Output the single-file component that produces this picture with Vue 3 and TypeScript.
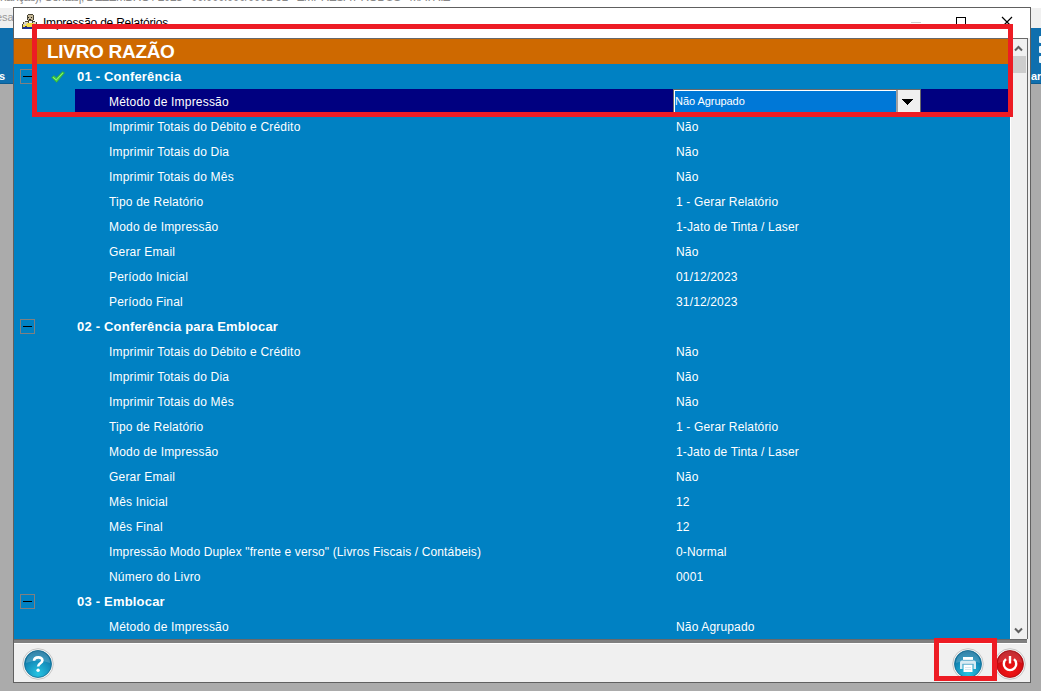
<script setup lang="ts">
interface Row { label: string; value: string; selected?: boolean; tight?: boolean }
interface Group { title: string; checked?: boolean; rows: Row[] }

const r = (label: string, value: string, tight = false): Row => ({ label, value, tight })

const common: Row[] = [
  r('Imprimir Totais do Débito e Crédito', 'Não'),
  r('Imprimir Totais do Dia', 'Não'),
  r('Imprimir Totais do Mês', 'Não'),
  r('Tipo de Relatório', '1 - Gerar Relatório'),
  r('Modo de Impressão', '1-Jato de Tinta / Laser'),
  r('Gerar Email', 'Não'),
]

const groups: Group[] = [
  {
    title: '01 - Conferência',
    checked: true,
    rows: [
      { label: 'Método de Impressão', value: 'Não Agrupado', selected: true },
      ...common,
      r('Período Inicial', '01/12/2023'),
      r('Período Final', '31/12/2023'),
    ],
  },
  {
    title: '02 - Conferência para Emblocar',
    rows: [
      ...common,
      r('Mês Inicial', '12'),
      r('Mês Final', '12'),
      r('Impressão Modo Duplex "frente e verso" (Livros Fiscais / Contábeis)', '0-Normal', true),
      r('Número do Livro', '0001'),
    ],
  },
  { title: '03 - Emblocar', rows: [r('Método de Impressão', 'Não Agrupado')] },
]
</script>

<template>
  <div class="desktop">
    <div class="apptitle"><span>nanças), Contas|, DEZEMBRO / 2023 - 00.000.000/0001-91 - EMPRESA PRODUS - MATRIZ</span></div>
    <div class="appmenu"><span>esa</span></div>
    <div class="appbar">
      <span>s</span>
      <div class="apptool">
        <i></i><i></i><i></i>
        <span>ar</span>
      </div>
    </div>

    <div class="window">
      <header class="titlebar">
        <svg class="appicon" width="16" height="16" viewBox="0 0 16 16" shape-rendering="crispEdges">
          <path d="M6 0h5v1h1v5h-1v1h2v1h2v2h1v5H0v-5h1V8h2V7h3V6H5V1h1z" fill="#4a4636" />
          <path d="M6 1h5v5H6z" fill="#c6b896" />
          <path d="M6 3h1v1H6zM9 3h1v1H9zM7 5h2v1H7z" fill="#222" />
          <path d="M2 8h4v2H2zM11 8h3v2h-3zM1 10h3v2H1zM12 10h3v2h-3z" fill="#d8d4bd" />
          <path d="M7 7h3v2H7z" fill="#f4f4f4" />
          <path d="M5 9h7v1h-1v3H5v-1H4v-2h1zM1 11h2v2H1zM13 11h2v2h-2z" fill="#f3dc45" />
          <path d="M1 13h14v2H1z" fill="#1c2f94" />
        </svg>
        <span class="wtitle">Impressão de Relatórios</span>
        <svg class="controls" width="110" height="12" viewBox="0 0 110 12" shape-rendering="crispEdges">
          <path d="M0 6.500h10" stroke="#ccc" />
          <path d="M45.500 1.500h9v9h-9z" fill="none" stroke="#000" />
          <path d="M91 1l10 10M101 1L91 11" stroke="#000" stroke-width="1.200" shape-rendering="auto" />
        </svg>
      </header>

      <div class="body">
        <div class="tree">
          <h1>LIVRO RAZÃO</h1>
          <template v-for="g in groups" :key="g.title">
            <div class="row group">
              <span class="toggle"></span>
              <span class="mark">
                <svg v-if="g.checked" width="14" height="12" viewBox="0 0 14 12">
                  <path d="M.5 6.500 3 4.500l2.300 2.200L11.500.5l2.200 1.300L5.700 11.500z" fill="#43d143" stroke="#2b9a54" stroke-width=".7" />
                  <path d="M2 6.300 5.300 9l6.500-7" fill="none" stroke="#8af178" />
                </svg>
              </span>
              <b>{{ g.title }}</b>
            </div>
            <div v-for="row in g.rows" :key="row.label" class="row item" :class="{ selected: row.selected }">
              <span class="label" :class="{ tight: row.tight }">{{ row.label }}</span>
              <span v-if="row.selected" class="combo">
                <span class="field">{{ row.value }}</span>
                <span class="drop">
                  <svg width="11" height="6" viewBox="0 0 11 6" shape-rendering="crispEdges"><path d="M0 0h11v1h-1v1H9v1H8v1H7v1H6v1H5V5H4V4H3V3H2V2H1V1H0z" /></svg>
                </span>
              </span>
              <span v-else class="value">{{ row.value }}</span>
            </div>
          </template>
        </div>
        <div class="scroll">
          <svg width="9" height="7" viewBox="0 0 9 7"><path d="M1 5.500 4.500 2 8 5.500" /></svg>
          <div class="thumb"></div>
          <svg class="down" width="9" height="7" viewBox="0 0 9 7"><path d="M1 1.500 4.500 5 8 1.500" /></svg>
        </div>
      </div>
      <div class="divider"></div>

      <footer class="actions">
        <svg width="32" height="32" viewBox="0 0 32 32">
          <defs>
            <radialGradient id="blue" cx=".5" cy=".85" r=".85">
              <stop offset="0" stop-color="#25c4e2" /><stop offset=".55" stop-color="#1590bd" /><stop offset="1" stop-color="#096390" />
            </radialGradient>
            <radialGradient id="red" cx=".5" cy=".75" r=".8">
              <stop offset="0" stop-color="#f31515" /><stop offset=".55" stop-color="#d90c12" /><stop offset="1" stop-color="#a80910" />
            </radialGradient>
          </defs>
          <circle cx="16" cy="16" r="15.300" fill="#f7f7f7" stroke="#c5c5c5" />
          <circle cx="16" cy="16" r="13.500" fill="url(#blue)" stroke="#106b91" stroke-width=".8" />
          <path d="M4 15a12 12 0 0 1 24 0q-12-5-24 0" fill="#fff" opacity=".18" />
          <path d="M12 12.800c.2-4.500 8.600-4.500 8.400-.3 0 2.800-4.300 2.800-4.300 6" fill="none" stroke="#fff" stroke-width="2.600" />
          <circle cx="16.100" cy="22.300" r="1.700" fill="#fff" />
        </svg>
        <span class="space"></span>
        <svg width="32" height="32" viewBox="0 0 32 32">
          <circle cx="16" cy="16" r="15.300" fill="#f7f7f7" stroke="#c5c5c5" />
          <circle cx="16" cy="16" r="13.500" fill="url(#blue)" stroke="#106b91" stroke-width=".8" />
          <path d="M4 15a12 12 0 0 1 24 0q-12-5-24 0" fill="#fff" opacity=".18" />
          <path d="M11 9h10v3H11z" fill="#fff" />
          <path d="M10 12.500h12q2 0 2 2V21h-2.500v-5h-11v5H8v-6.500q0-2 2-2" fill="#d8ebf3" />
          <path d="M11.500 16.500h9V24h-9z" fill="#fff" />
          <path d="M13 19.500h6M13 21.500h6" stroke="#d5e8f0" />
          <path d="M11 12.300h10M10.500 16.200h11" stroke="#75b4cf" stroke-width=".8" />
        </svg>
        <svg width="32" height="32" viewBox="0 0 32 32" class="power">
          <circle cx="16" cy="16" r="15.300" fill="#f7f7f7" stroke="#c5c5c5" />
          <circle cx="16" cy="16" r="13.500" fill="url(#red)" stroke="#a40d12" stroke-width=".8" />
          <path d="M4 15a12 12 0 0 1 24 0q-12-5-24 0" fill="#fff" opacity=".14" />
          <path d="M12 11.200a6.200 6.200 0 1 0 8 0M16 8v7.500" fill="none" stroke="#fff" stroke-width="2.400" />
        </svg>
      </footer>
    </div>

    <div class="highlight first"></div>
    <div class="highlight second"></div>
  </div>
</template>

<style>
body { margin: 0; overflow: hidden; }
</style>

<style scoped>
* { box-sizing: border-box; }
.desktop { position: relative; width: 1041px; height: 691px; overflow: hidden; background: #ababab; font-family: "Liberation Sans", Arial, sans-serif; }
.apptitle { height: 8px; background: #fff; overflow: hidden; color: #888; font-size: 12px; white-space: nowrap; }
.apptitle span { display: block; margin-top: -10px; line-height: 14px; letter-spacing: -.6px; }
.appmenu { height: 20px; background: #f0f0f0; color: #999; font-size: 11px; line-height: 18px; }
.appmenu span { margin-left: -4px; }
.appbar { height: 56px; background: #0f6fae; border-bottom: 1px solid #0a5c93; display: flex; justify-content: space-between; color: #fff; font-size: 11px; font-weight: bold; line-height: 13px; }
.appbar > span { margin: 42px 0 0 -1px; }
.apptool { width: 10px; display: flex; flex-direction: column; overflow: hidden; padding-top: 8px; }
.apptool i { width: 8px; height: 7px; border-radius: 1px; background: #eef6fb; margin: 0 0 3px 8px; flex: none; }
.apptool span { margin-top: 4px; }
.window { position: absolute; left: 13px; top: 7px; width: 1018px; height: 676px; border: 1px solid #606060; background: #f0f0f0; display: flex; flex-direction: column; }
.titlebar { height: 30px; background: #fff; display: flex; flex: none; padding: 6px 9px 0 8px; }
.wtitle { font-size: 12px; line-height: 19px; margin-left: 5px; flex: 1; letter-spacing: -.22px; }
.controls { margin-top: 2px; }
.body { height: 601px; border-top: 1px solid #696969; display: flex; flex: none; width: 1014px; border-right: 1px solid #696969; }
.tree { width: 996px; background: #0081c3; overflow: hidden; color: #fff; flex: none; }
h1 { margin: 0; height: 25px; background: #ce6900; font-size: 19px; line-height: 25px; padding-left: 33px; letter-spacing: -.3px; }
.row { height: 25px; display: flex; font-size: 12px; line-height: 26px; white-space: nowrap; letter-spacing: .15px; }
.group { align-items: center; padding-left: 6px; line-height: 25px; }
.toggle { width: 15px; height: 15px; border: 1px solid #808080; display: flex; align-items: center; justify-content: center; }
.toggle::before { content: ""; width: 9px; height: 1px; background: #000; }
.mark { width: 42px; padding-left: 16px; display: flex; }
.group b { font-size: 13px; letter-spacing: .2px; }
.item { margin-left: 61px; padding-left: 34px; }
.label { width: 567px; flex: none; letter-spacing: .2px; }
.tight { letter-spacing: .13px; }
.selected { background: #000080; }
.combo { width: 248px; height: 25px; margin-left: -3px; border: 1px solid #696969; display: flex; font-size: 11px; letter-spacing: -.05px; }
.field { width: 222px; flex: none; background: #0078d7; border: 1px solid #fff; border-right: 0; line-height: 21px; }
.drop { flex: 1; background: #f0f0f0; border-left: 2px solid #a0a0a0; display: flex; align-items: center; justify-content: center; padding-right: 3px; }
.scroll { flex: 1; background: #f0f0f0; display: flex; flex-direction: column; align-items: center; padding: 6px 1px 0 0; border-left: 1px solid #fff; }
.scroll path { fill: none; stroke: #606060; stroke-width: 2; }
.thumb { width: 15px; height: 17px; background: #cdcdcd; margin-top: 4px; }
.down { margin-top: auto; margin-bottom: 5px; }
.divider { height: 5px; width: 1013px; flex: none; background: #808080; border-top: 1px solid #696969; border-bottom: 1px solid #fff; }
.actions { height: 38px; display: flex; align-items: center; padding: 2px 4px 0 8px; }
.space { flex: 1; }
.power { margin-left: 10px; }
.highlight { position: absolute; border: 5px solid #ed1c24; }
.first { left: 32px; top: 24px; width: 981px; height: 93px; }
.second { left: 934px; top: 638px; width: 63px; height: 43px; }
</style>
